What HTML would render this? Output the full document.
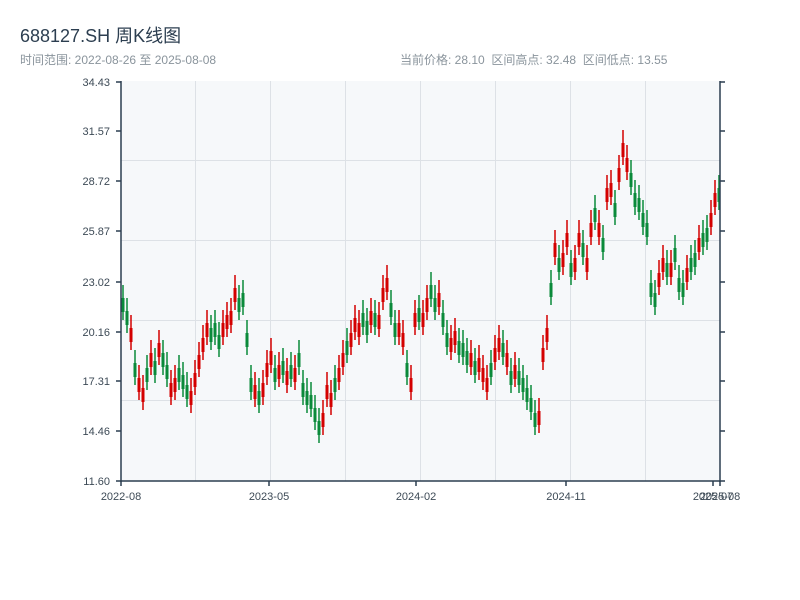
<!DOCTYPE html>
<html><head><meta charset="utf-8"><style>
body{margin:0;background:#fff;width:800px;height:600px;overflow:hidden;font-family:"Liberation Sans","Noto Sans CJK SC",sans-serif}
.t{position:absolute;left:20px;top:22px;font-size:18px;color:#2c3e50}
.s{position:absolute;top:51px;font-size:12px;color:#8a949c}
</style></head><body>
<div class="t">688127.SH 周K线图</div>
<div class="s" style="left:20px">时间范围: 2022-08-26 至 2025-08-08</div>
<div class="s" style="left:400px">当前价格: 28.10&nbsp; 区间高点: 32.48&nbsp; 区间低点: 13.55</div>
<svg width="800" height="600" style="position:absolute;left:0;top:0" xmlns="http://www.w3.org/2000/svg">
<rect x="121" y="81" width="599" height="400" fill="#f6f8fa"/>
<g stroke="#dde1e6" stroke-width="1">
<line x1="195.5" y1="81" x2="195.5" y2="481"/><line x1="270.5" y1="81" x2="270.5" y2="481"/><line x1="345.5" y1="81" x2="345.5" y2="481"/><line x1="420.5" y1="81" x2="420.5" y2="481"/><line x1="495.5" y1="81" x2="495.5" y2="481"/><line x1="570.5" y1="81" x2="570.5" y2="481"/><line x1="645.5" y1="81" x2="645.5" y2="481"/>
<line x1="121" y1="160.5" x2="720" y2="160.5"/><line x1="121" y1="240.5" x2="720" y2="240.5"/><line x1="121" y1="320.5" x2="720" y2="320.5"/><line x1="121" y1="400.5" x2="720" y2="400.5"/>
</g>
<!-- green -->
<g stroke="#0a8a3a" fill="none">
<path stroke-width="1.5" d="M123 285V320M127 298V333M135 350V385M147 355V390M155 348V383M163 340V375M167 352V387M179 355V390M183 362V397M187 372V407M211 315V350M215 310V345M219 322V357M239 285V320M243 280V315M247 320V355M251 365V400M259 378V413M275 355V390M283 348V383M291 352V387M299 340V375M303 370V405M307 378V413M311 382V417M315 395V430M319 408V443M335 365V400M347 328V363M363 300V335M367 308V343M375 300V335M391 290V325M395 310V345M407 350V385M419 295V330M431 272V307M435 285V320M443 300V335M447 320V355M459 328V363M463 330V365M467 338V373M475 348V383M491 350V385M503 330V365M511 358V393M519 358V393M523 365V400M527 375V410M531 385V420M535 400V435M551 270V305M559 245V280M571 250V285M583 230V265M595 195V230M603 225V260M615 190V225M631 160V195M635 180V215M639 185V220M643 200V235M647 210V245M651 270V305M655 280V315M667 250V285M675 235V270M679 265V300M683 270V305M691 245V280M695 240V275M703 220V255M707 215V250M719 175V210"/>
<path stroke-width="3" d="M123 298V312M127 311V325M135 363V377M147 368V382M155 361V375M163 353V367M167 365V379M179 368V382M183 375V389M187 385V399M211 328V342M215 323V337M219 335V349M239 298V312M243 293V307M247 333V347M251 378V392M259 391V405M275 368V382M283 361V375M291 365V379M299 353V367M303 383V397M307 391V405M311 395V409M315 408V422M319 421V435M335 378V392M347 341V355M363 313V327M367 321V335M375 313V327M391 303V317M395 323V337M407 363V377M419 308V322M431 285V299M435 298V312M443 313V327M447 333V347M459 341V355M463 343V357M467 351V365M475 361V375M491 363V377M503 343V357M511 371V385M519 371V385M523 378V392M527 388V402M531 398V412M535 413V427M551 283V297M559 258V272M571 263V277M583 243V257M595 208V222M603 238V252M615 203V217M631 173V187M635 193V207M639 198V212M643 213V227M647 223V237M651 283V297M655 293V307M667 263V277M675 248V262M679 278V292M683 283V297M691 258V272M695 253V267M703 233V247M707 228V242M719 188V202"/>
</g>
<!-- red -->
<g stroke="#d40000" fill="none">
<path stroke-width="1.5" d="M131 315V350M139 365V400M143 375V410M151 340V375M159 330V365M171 370V405M175 365V400M191 378V413M195 360V395M199 342V377M203 325V360M207 310V345M223 310V345M227 302V337M231 298V333M235 275V310M255 372V407M263 370V405M267 350V385M271 338V373M279 352V387M287 358V393M295 355V390M323 400V435M327 372V407M331 380V415M339 355V390M343 340V375M351 320V355M355 305V340M359 310V345M371 298V333M379 302V337M383 275V310M387 265V300M399 310V345M403 320V355M411 365V400M415 300V335M423 300V335M427 285V320M439 280V315M451 325V360M455 318V353M471 340V375M479 345V380M483 355V390M487 365V400M495 335V370M499 325V360M507 340V375M515 352V387M539 398V433M543 335V370M547 315V350M555 230V265M563 240V275M567 220V255M575 245V280M579 220V255M587 245V280M591 210V245M599 210V245M607 175V210M611 170V205M619 155V190M623 130V165M627 145V180M659 260V295M663 245V280M671 250V285M687 255V290M699 225V260M711 200V235M715 180V215"/>
<path stroke-width="3" d="M131 328V342M139 378V392M143 388V402M151 353V367M159 343V357M171 383V397M175 378V392M191 391V405M195 373V387M199 355V369M203 338V352M207 323V337M223 323V337M227 315V329M231 311V325M235 288V302M255 385V399M263 383V397M267 363V377M271 351V365M279 365V379M287 371V385M295 368V382M323 413V427M327 385V399M331 393V407M339 368V382M343 353V367M351 333V347M355 318V332M359 323V337M371 311V325M379 315V329M383 288V302M387 278V292M399 323V337M403 333V347M411 378V392M415 313V327M423 313V327M427 298V312M439 293V307M451 338V352M455 331V345M471 353V367M479 358V372M483 368V382M487 378V392M495 348V362M499 338V352M507 353V367M515 365V379M539 411V425M543 348V362M547 328V342M555 243V257M563 253V267M567 233V247M575 258V272M579 233V247M587 258V272M591 223V237M599 223V237M607 188V202M611 183V197M619 168V182M623 143V157M627 158V172M659 273V287M663 258V272M671 263V277M687 268V282M699 238V252M711 213V227M715 193V207"/>
</g>
<g stroke="#2c3e50" stroke-width="1.5" fill="none">
<line x1="121" y1="81" x2="121" y2="482"/><line x1="720" y1="81" x2="720" y2="482"/><line x1="116" y1="481" x2="725" y2="481"/>
<path d="M116 82H121M116 131H121M116 181H121M116 231H121M116 282H121M116 332H121M116 381H121M116 431H121M121 481V486M269 481V486M416 481V486M566 481V486M713 481V486M720 481V486M720 82H725M720 131H725M720 181H725M720 231H725M720 282H725M720 332H725M720 381H725M720 431H725"/>
</g>
<g font-size="11" fill="#3d4a56" text-anchor="end" font-family="Liberation Sans,sans-serif">
<text x="110" y="86">34.43</text><text x="110" y="135">31.57</text><text x="110" y="185">28.72</text><text x="110" y="235">25.87</text><text x="110" y="286">23.02</text><text x="110" y="336">20.16</text><text x="110" y="385">17.31</text><text x="110" y="435">14.46</text><text x="110" y="485">11.60</text>
</g>
<g font-size="11" fill="#3d4a56" text-anchor="middle" font-family="Liberation Sans,sans-serif">
<text x="121" y="500">2022-08</text><text x="269" y="500">2023-05</text><text x="416" y="500">2024-02</text><text x="566" y="500">2024-11</text><text x="713" y="500">2025-07</text><text x="720" y="500">2025-08</text>
</g>
</svg>
</body></html>
